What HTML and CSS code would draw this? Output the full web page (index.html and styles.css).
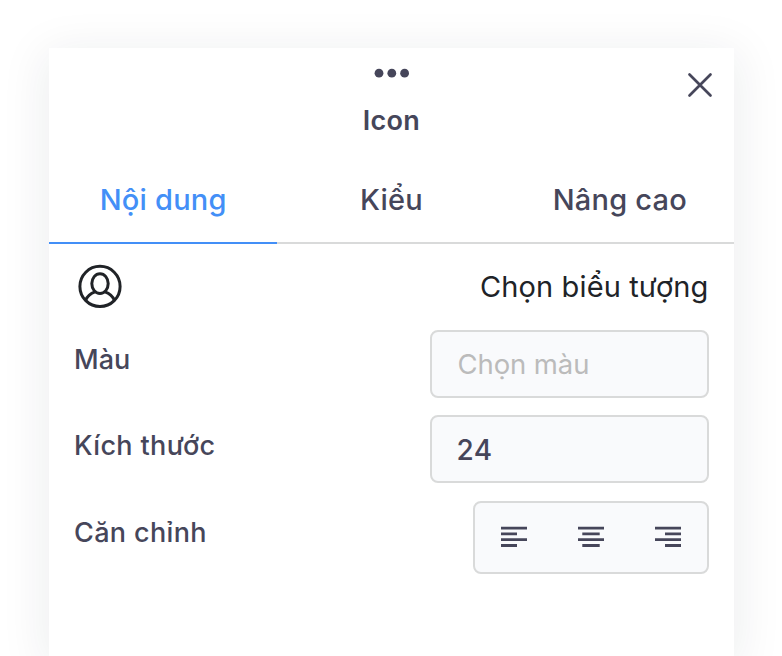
FILE: index.html
```html
<!DOCTYPE html>
<html lang="vi">
<head>
<meta charset="utf-8">
<title>Icon</title>
<link rel="stylesheet" href="styles.css">
</head>
<body>
<main class="panel">
  <header class="header">
    <svg class="dots" width="36" height="10" viewBox="0 0 36 10"><circle cx="5" cy="5.2" r="4.4"/><circle cx="17.8" cy="5.2" r="4.4"/><circle cx="30.6" cy="5.2" r="4.4"/></svg>
    <h1 class="title">Icon</h1>
    <button class="close" aria-label="Đóng"><svg width="26" height="26" viewBox="0 0 26 26"><path d="M2.5 2.5 23.5 23.5M23.5 2.5 2.5 23.5"/></svg></button>
  </header>
  <nav class="tabs">
    <a class="tab active"><span>Nội dung</span></a>
    <a class="tab"><span>Kiểu</span></a>
    <a class="tab"><span>Nâng cao</span></a>
  </nav>
  <section class="content">
    <div class="row picker">
      <svg class="user" width="44" height="44" viewBox="0 0 44 44"><circle cx="22" cy="22.4" r="20.1"/><ellipse cx="22" cy="19.6" rx="8.2" ry="9.9"/><path d="M7.7 36C9.5 31.8 12.8 29.3 17 27.8M27 27.8C31.2 29.3 34.5 31.8 36.3 36"/></svg>
      <span class="choose">Chọn biểu tượng</span>
    </div>
    <div class="row color"><span class="label">Màu</span><div class="field placeholder">Chọn màu</div></div>
    <div class="row size"><span class="label">Kích thước</span><div class="field">24</div></div>
    <div class="row alignment"><span class="label">Căn chỉnh</span>
      <div class="align">
        <svg width="26" height="22" viewBox="0 0 26 22"><path d="M0 2.1H26M0 7.9H16M0 13.7H26M0 19.5H16"/></svg>
        <svg width="26" height="22" viewBox="0 0 26 22"><path d="M0 2.1H26M4.3 7.9H21.7M0 13.7H26M4.3 19.5H21.7"/></svg>
        <svg width="26" height="22" viewBox="0 0 26 22"><path d="M0 2.1H26M10 7.9H26M0 13.7H26M10 19.5H26"/></svg>
      </div>
    </div>
  </section>
</main>
</body>
</html>
```
FILE: styles.css
```css
* { box-sizing: border-box; }
html, body { height: 100%; overflow: hidden; }
body {
  margin: 0;
  padding: 48px 48px 0 49px;
  background: #fff;
  color: #46465a;
  font-family: Inter, "Liberation Sans", sans-serif;
}
.panel {
  height: 100%;
  background: #fff;
  box-shadow: 0 8px 44px 4px rgba(20, 40, 50, 0.08);
}
.header {
  position: relative;
  display: flex;
  flex-direction: column;
  align-items: center;
  height: 110px;
  padding-top: 20px;
}
.dots { fill: #46465a; }
.title {
  margin: 27px 0 0;
  font-size: 27px;
  font-weight: 600;
  line-height: 32px;
  letter-spacing: 0.3px;
}
.close {
  position: absolute;
  top: 24px;
  right: 21px;
  width: 26px;
  height: 26px;
  padding: 0;
  border: 0;
  background: none;
}
.close svg { display: block; fill: none; stroke: #46465a; stroke-width: 2.7; stroke-linecap: round; }
.tabs {
  display: grid;
  grid-template-columns: repeat(3, 1fr);
  height: 85.5px;
}
.tab {
  padding-top: 24px;
  border-bottom: 2px solid #d9dada;
  font-size: 29px;
  font-weight: 500;
  line-height: 36px;
  letter-spacing: 0.2px;
  text-align: center;
  white-space: nowrap;
}
.tab.active { border-color: #438ff7; color: #438ff7; }
.content { padding: 18px 25.5px 0 25px; }
.row { display: flex; justify-content: space-between; }
.picker { height: 68.5px; padding-left: 4px; padding-top: 2px; }
.user { fill: none; stroke: #202327; stroke-width: 3; }
.choose { padding-top: 5px; color: #202327; font-size: 29px; line-height: 36px; letter-spacing: 0.12px; }
.color { height: 85px; }
.size { height: 86px; }
.label { padding-top: 14px; font-size: 27px; font-weight: 500; line-height: 34px; letter-spacing: 0.35px; }
.color .label { padding-top: 13px; letter-spacing: 0; }
.alignment .label { padding-top: 15px; }
.field {
  width: 278.5px;
  height: 68px;
  padding: 0 24.5px;
  border: 2px solid #d9dada;
  border-radius: 8px;
  background: #f9fafc;
  font-size: 28px;
  font-weight: 500;
  line-height: 66px;
  letter-spacing: 0.5px;
}
.placeholder { padding-left: 25.5px; color: #bbb; font-size: 27.5px; font-weight: 400; line-height: 65px; letter-spacing: -0.1px; }
.align {
  display: flex;
  justify-content: space-between;
  align-items: center;
  width: 235.5px;
  height: 72.5px;
  padding: 0 25.5px;
  border: 2px solid #d9dada;
  border-radius: 8px;
  background: #f9fafc;
}
.align svg { stroke: #46465a; stroke-width: 2.8; }
```
